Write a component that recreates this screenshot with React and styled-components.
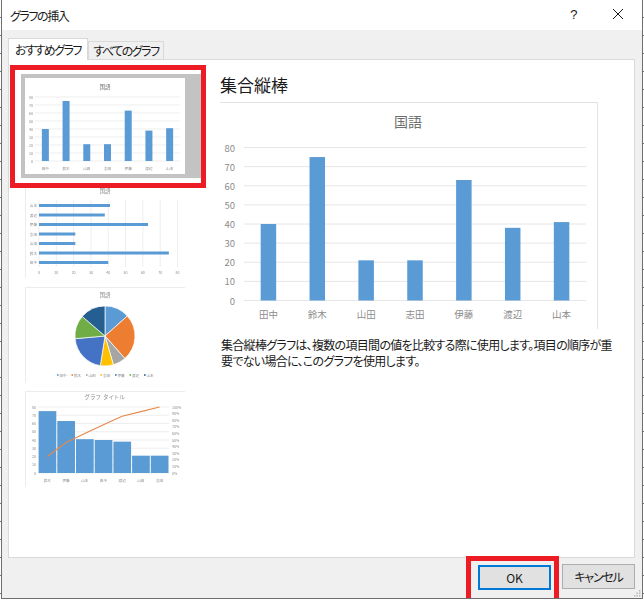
import React from "react";
import styled, { createGlobalStyle } from "styled-components";

const GlobalStyle = createGlobalStyle`
  html, body {
    margin: 0;
    padding: 0;
    height: 600px;
    overflow: hidden;
  }
  body {
    background: repeating-linear-gradient(to bottom, #fff 0 17px, #777 17px 18px);
    font-family: "Noto Sans CJK JP", "Noto Sans", sans-serif;
    font-feature-settings: "palt";
    color: #1a1a1a;
  }
`;

const Dialog = styled.div`
  position: relative;
  box-sizing: border-box;
  width: 642px;
  height: 599px;
  margin-left: 1px;
  border: 1px solid #6f6f6f;
  border-top: 0;
  display: flex;
  flex-direction: column;
  background: #f0f0f0;
  overflow: hidden;
`;

const TitleBar = styled.div`
  height: 30px;
  flex: none;
  display: flex;
  align-items: center;
  background: #fff;
  padding: 0 19px 0 8px;
  font-size: 12px;
  letter-spacing: -1.4px;
`;

const Title = styled.div`
  flex: 1;
`;

const HelpButton = styled.div`
  font-size: 13px;
  font-family: "Liberation Sans", sans-serif;
  margin: 0 37px 2px 0;
`;

const CloseIcon = styled.svg`
  margin-bottom: 2px;
`;

const Body = styled.div`
  flex: 1;
  display: flex;
  flex-direction: column;
  padding: 8px 7px 0 6px;
  min-height: 0;
`;

const TabRow = styled.div`
  display: flex;
  align-items: flex-end;
  height: 22px;
  margin-bottom: -1px;
`;

const Tab = styled.div`
  box-sizing: border-box;
  position: relative;
  z-index: ${(props) => (props.$active ? 1 : 0)};
  width: ${(props) => props.$width}px;
  height: ${(props) => (props.$active ? 22 : 19)}px;
  display: flex;
  align-items: center;
  justify-content: center;
  white-space: nowrap;
  font-size: 12px;
  letter-spacing: -1.5px;
  border: 1px solid #d9d9d9;
  border-bottom: ${(props) => (props.$active ? "0" : "1px solid #d9d9d9")};
  background: ${(props) => (props.$active ? "#fff" : "#f0f0f0")};
`;

const Panel = styled.div`
  box-sizing: border-box;
  height: 499px;
  flex: none;
  display: flex;
  background: #fff;
  border: 1px solid #d9d9d9;
  padding: 0 0 0 1px;
`;

const ThumbColumn = styled.div`
  width: 196px;
  flex: none;
  padding-top: 5px;
`;

const SelectedFrame = styled.div`
  box-sizing: border-box;
  height: 123px;
  border: 5px solid #ed1c24;
  padding: 4px 0 0 6px;
`;

const SelectedThumb = styled.div`
  width: 160px;
  height: 96px;
  padding: 4px 16px 4px 4px;
  background: #c3c3c3;
`;

const ThumbSheet = styled.div`
  width: 160px;
  height: 96px;
  background: #fff;
`;

const ThumbList = styled.div`
  display: flex;
  flex-direction: column;
  margin-left: 15px;
`;

const Thumb = styled.div`
  box-sizing: border-box;
  width: 160px;
  height: ${(props) => props.$height}px;
  margin-top: ${(props) => props.$gap}px;
  border-left: 1px solid #ececec;
  border-top: ${(props) => (props.$noTop ? "0" : "1px solid #ececec")};
`;

const Svg = styled.svg`
  display: block;
  overflow: visible;
  font-family: "Noto Sans CJK JP", "Noto Sans", sans-serif;
  filter: ${(props) => (props.$soft ? "blur(0.3px)" : "none")};
`;

const DetailColumn = styled.div`
  flex: 1;
  margin-left: 14px;
  padding-top: 13px;
`;

const Heading = styled.div`
  font-size: 17px;
  line-height: 24px;
  margin-bottom: 5px;
`;

const ChartFrame = styled.div`
  box-sizing: border-box;
  width: 378px;
  height: 227px;
  border-top: 1px solid #e3e3e3;
  border-right: 1px solid #e3e3e3;
`;

const Description = styled.p`
  margin: 8px 0 0 1px;
  font-size: 12px;
  line-height: 16px;
  letter-spacing: -0.7px;
  white-space: nowrap;
`;

const Footer = styled.div`
  flex: 1;
  display: flex;
  justify-content: flex-end;
  gap: 11px;
  padding-top: 6px;
`;

const OkWrap = styled.div`
  position: relative;
  &::after {
    content: "";
    position: absolute;
    left: -12px;
    right: -8px;
    top: -8px;
    bottom: -8px;
    border: 5px solid #ed1c24;
    pointer-events: none;
  }
`;

const Button = styled.button`
  box-sizing: border-box;
  width: 73px;
  height: 25px;
  margin: 0;
  padding: 0;
  font-family: inherit;
  font-feature-settings: inherit;
  font-size: 12px;
  letter-spacing: ${(props) => (props.$primary ? "0" : "-1.2px")};
  color: #1a1a1a;
  background: #e1e1e1;
  border: ${(props) => (props.$primary ? "2px solid #0078d7" : "1px solid #adadad")};
`;

const Grip = styled.svg`
  position: absolute;
  right: 0;
  bottom: 0;
`;

const students = [
  ["田中", 40],
  ["鈴木", 75],
  ["山田", 21],
  ["志田", 21],
  ["伊藤", 63],
  ["渡辺", 38],
  ["山本", 41],
];

const grey = "#8c8c8c";
const gridColor = "#e6e6e6";
const blue = "#5b9bd5";
const ticks = [0, 10, 20, 30, 40, 50, 60, 70, 80];
const percents = [0, 10, 20, 30, 40, 50, 60, 70, 80, 90, 100];

function ColumnChart({ width, height, x0, x1, top, base, barWidth, titleX, titleY, titleSize, labelSize, labelY, axisX, gridWidth, soft }) {
  const step = (x1 - x0) / students.length;
  const yOf = (v) => base - ((base - top) * v) / 80;
  return (
    <Svg $soft={soft} width={width} height={height} viewBox={`0 0 ${width} ${height}`}>
      <text x={titleX} y={titleY} fontSize={titleSize} fill="#6f6f6f" textAnchor="middle" dominantBaseline="central">
        国語
      </text>
      {ticks.map((t) => (
        <g key={t}>
          <line x1={x0} x2={x1} y1={yOf(t)} y2={yOf(t)} stroke={gridColor} strokeWidth={gridWidth} />
          <text x={axisX} y={yOf(t)} fontSize={labelSize} fill={grey} textAnchor="end" dominantBaseline="central">
            {t}
          </text>
        </g>
      ))}
      {students.map(([name, value], i) => {
        const cx = x0 + step * (i + 0.5);
        return (
          <g key={name}>
            <rect x={cx - barWidth / 2} y={yOf(value)} width={barWidth} height={base - yOf(value)} fill={blue} />
            <text x={cx} y={labelY} fontSize={labelSize} fill={grey} textAnchor="middle" dominantBaseline="central">
              {name}
            </text>
          </g>
        );
      })}
    </Svg>
  );
}

function BarThumb() {
  const rows = [...students].reverse();
  const xOf = (v) => 13 + (138.5 * v) / 80;
  return (
    <Svg $soft width="159" height="90" viewBox="0 6 159 90">
      <text x="79" y="9" fontSize="5.5" fill={grey} textAnchor="middle" dominantBaseline="central">国語</text>
      {ticks.map((t) => (
        <g key={t}>
          <line x1={xOf(t)} x2={xOf(t)} y1="18" y2="85" stroke={gridColor} strokeWidth="0.7" />
          <text x={xOf(t)} y="90" fontSize="3.6" fill={grey} textAnchor="middle" dominantBaseline="central">{t}</text>
        </g>
      ))}
      {rows.map(([name, value], i) => (
        <g key={name}>
          <rect x={xOf(0)} y={22 + i * 9.5} width={xOf(value) - xOf(0)} height="3" fill={blue} />
          <text x="11" y={23.5 + i * 9.5} fontSize="3.6" fill={grey} textAnchor="end" dominantBaseline="central">{name}</text>
        </g>
      ))}
    </Svg>
  );
}

const pieColors = ["#5b9bd5", "#ed7d31", "#a5a5a5", "#ffc000", "#4472c4", "#70ad47", "#255e91"];

function PieThumb() {
  const total = students.reduce((sum, s) => sum + s[1], 0);
  const cx = 79;
  const cy = 48;
  const r = 30;
  let angle = -Math.PI / 2;
  return (
    <Svg $soft width="159" height="95" viewBox="0 0 159 95">
      <text x="79" y="7" fontSize="5.5" fill={grey} textAnchor="middle" dominantBaseline="central">国語</text>
      {students.map(([name, value], i) => {
        const next = angle + (value / total) * Math.PI * 2;
        const d = `M${cx} ${cy}L${cx + r * Math.cos(angle)} ${cy + r * Math.sin(angle)}A${r} ${r} 0 0 1 ${cx + r * Math.cos(next)} ${cy + r * Math.sin(next)}Z`;
        angle = next;
        return <path key={name} d={d} fill={pieColors[i]} stroke="#fff" strokeWidth="0.7" />;
      })}
      {students.map(([name], i) => (
        <g key={name}>
          <rect x={31 + i * 14.5} y="86.2" width="1.6" height="1.6" fill={pieColors[i]} />
          <text x={33.5 + i * 14.5} y="87" fontSize="3.6" fill={grey} dominantBaseline="central">{name}</text>
        </g>
      ))}
    </Svg>
  );
}

function ParetoThumb() {
  const sorted = [
    ["鈴木", 75],
    ["伊藤", 63],
    ["山本", 41],
    ["田中", 40],
    ["渡辺", 38],
    ["山田", 21],
    ["志田", 21],
  ];
  const total = sorted.reduce((sum, s) => sum + s[1], 0);
  const x0 = 12;
  const step = 18.7;
  const top = 15;
  const base = 81;
  const yOf = (v) => base - ((base - top) * v) / 80;
  let sum = 0;
  const linePoints = sorted
    .map(([, value], i) => {
      sum += value;
      return `${x0 + step * (i + 0.5)},${base - ((base - top) * sum) / total}`;
    })
    .join(" ");
  return (
    <Svg $soft width="159" height="95" viewBox="0 0 159 95">
      <text x="79" y="5" fontSize="5.5" fill={grey} textAnchor="middle" dominantBaseline="central" letterSpacing="0.8">
        グラフ タイトル
      </text>
      {ticks.map((t) => (
        <g key={t}>
          <line x1={x0} x2="143" y1={yOf(t)} y2={yOf(t)} stroke={gridColor} strokeWidth="0.7" />
          <text x="10" y={yOf(t)} fontSize="3.6" fill={grey} textAnchor="end" dominantBaseline="central">{t}</text>
        </g>
      ))}
      {percents.map((p) => (
        <text key={p} x="146" y={base - ((base - top) * p) / 100} fontSize="3.6" fill={grey} dominantBaseline="central">
          {p}%
        </text>
      ))}
      {sorted.map(([name, value], i) => (
        <g key={name}>
          <rect x={x0 + 0.6 + step * i} y={yOf(value)} width={step - 1} height={base - yOf(value)} fill={blue} />
          <text x={x0 + step * (i + 0.5)} y="88" fontSize="3.6" fill={grey} textAnchor="middle" dominantBaseline="central">{name}</text>
        </g>
      ))}
      <polyline points={linePoints} fill="none" stroke="#e5894c" strokeWidth="1.1" />
    </Svg>
  );
}

export default function App() {
  return (
    <>
      <GlobalStyle />
      <Dialog>
        <TitleBar>
          <Title>グラフの挿入</Title>
          <HelpButton>?</HelpButton>
          <CloseIcon width="10" height="10" viewBox="0 0 10 10">
            <path d="M0 0L10 10M10 0L0 10" stroke="#1a1a1a" strokeWidth="1" fill="none" />
          </CloseIcon>
        </TitleBar>
        <Body>
          <TabRow>
            <Tab $active $width={80}>おすすめグラフ</Tab>
            <Tab $width={76}>すべてのグラフ</Tab>
          </TabRow>
          <Panel>
            <ThumbColumn>
              <SelectedFrame>
                <SelectedThumb>
                  <ThumbSheet>
                    <ColumnChart
                      soft
                      width={160}
                      height={96}
                      x0={10}
                      x1={155}
                      top={19}
                      base={83}
                      barWidth={7}
                      titleX={80}
                      titleY={9}
                      titleSize={5.5}
                      labelSize={3.6}
                      labelY={90}
                      axisX={8}
                      gridWidth={0.7}
                    />
                  </ThumbSheet>
                </SelectedThumb>
              </SelectedFrame>
              <ThumbList>
                <Thumb $height={90} $gap={0} $noTop>
                  <BarThumb />
                </Thumb>
                <Thumb $height={96} $gap={9}>
                  <PieThumb />
                </Thumb>
                <Thumb $height={96} $gap={8}>
                  <ParetoThumb />
                </Thumb>
              </ThumbList>
            </ThumbColumn>
            <DetailColumn>
              <Heading>集合縦棒</Heading>
              <ChartFrame>
                <ColumnChart
                  width={377}
                  height={226}
                  x0={24}
                  x1={366}
                  top={44.5}
                  base={197.5}
                  barWidth={15.5}
                  titleX={188}
                  titleY={18}
                  titleSize={14}
                  labelSize={9.5}
                  labelY={211}
                  axisX={15}
                  gridWidth={1}
                />
              </ChartFrame>
              <Description>
                集合縦棒グラフは、複数の項目間の値を比較する際に使用します。項目の順序が重
                <br />
                要でない場合に、このグラフを使用します。
              </Description>
            </DetailColumn>
          </Panel>
          <Footer>
            <OkWrap>
              <Button $primary>OK</Button>
            </OkWrap>
            <Button>キャンセル</Button>
          </Footer>
        </Body>
        <Grip width="9" height="9" viewBox="0 0 9 9">
          <path d="M6 1h1.400v1.400H6zM3.500 3.500h1.400v1.400H3.500zM6 3.500h1.400v1.400H6zM1 6h1.400v1.400H1zM3.500 6h1.400v1.400H3.500zM6 6h1.400v1.400H6z" fill="#b5b5b5" />
        </Grip>
      </Dialog>
    </>
  );
}
